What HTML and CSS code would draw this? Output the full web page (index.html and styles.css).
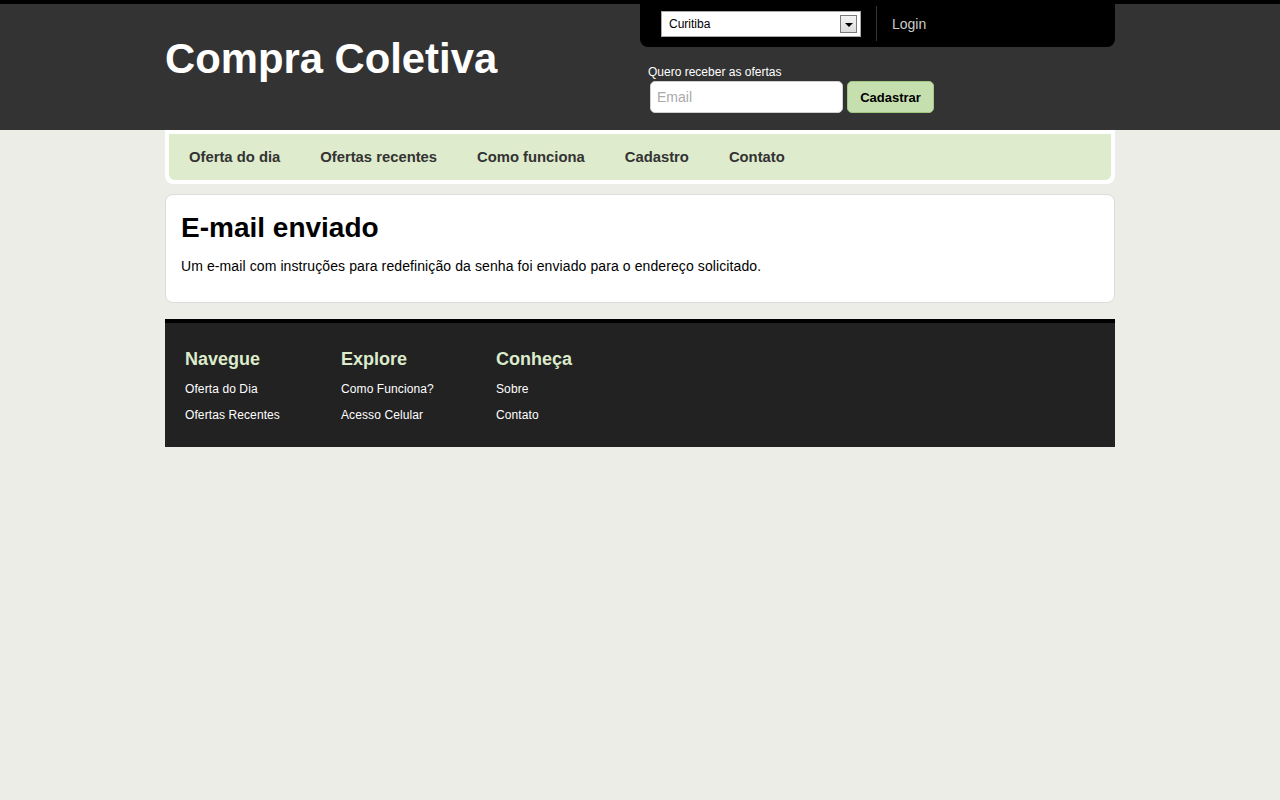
FILE: index.html
```html
<!DOCTYPE html>
<html lang="pt-BR">
<head>
<meta charset="utf-8">
<title>Compra Coletiva</title>
<link rel="stylesheet" href="styles.css">
</head>
<body>
<header class="topbar">
  <div class="header-inner">
    <h1 class="logo">Compra Coletiva</h1>
    <div class="header-right">
      <div class="account-bar">
        <div class="city-select">
          <span class="city-name">Curitiba</span>
          <span class="city-arrow"></span>
        </div>
        <span class="divider"></span>
        <a class="login" href="#">Login</a>
      </div>
      <form class="subscribe">
        <label class="subscribe-label">Quero receber as ofertas</label>
        <div class="subscribe-row">
          <input class="email-input" type="text" placeholder="Email">
          <button class="btn-subscribe" type="button">Cadastrar</button>
        </div>
      </form>
    </div>
  </div>
</header>

<nav class="main-nav">
  <ul class="nav-list">
    <li><a href="#">Oferta do dia</a></li>
    <li><a href="#">Ofertas recentes</a></li>
    <li><a href="#">Como funciona</a></li>
    <li><a href="#">Cadastro</a></li>
    <li><a href="#">Contato</a></li>
  </ul>
</nav>

<main class="content-box">
  <h2 class="content-title">E-mail enviado</h2>
  <p class="content-text">Um e-mail com instruções para redefinição da senha foi enviado para o endereço solicitado.</p>
</main>

<footer class="site-footer">
  <div class="footer-col">
    <h3 class="footer-title">Navegue</h3>
    <a href="#">Oferta do Dia</a>
    <a href="#">Ofertas Recentes</a>
  </div>
  <div class="footer-col">
    <h3 class="footer-title">Explore</h3>
    <a href="#">Como Funciona?</a>
    <a href="#">Acesso Celular</a>
  </div>
  <div class="footer-col">
    <h3 class="footer-title">Conheça</h3>
    <a href="#">Sobre</a>
    <a href="#">Contato</a>
  </div>
</footer>
</body>
</html>
```

FILE: styles.css
```css
* { box-sizing: border-box; }

body {
  margin: 0;
  background: #ededE7;
  font-family: "Liberation Sans", Arial, sans-serif;
  color: #000;
}

a { text-decoration: none; }

.topbar {
  background: #333333;
  border-top: 4px solid #000;
  height: 130px;
}

.header-inner {
  width: 950px;
  margin: 0 auto;
  display: flex;
  justify-content: space-between;
  align-items: flex-start;
}

.logo {
  margin: 31px 0 0 0;
  font-size: 41.8px;
  line-height: 48px;
  font-weight: bold;
  color: #fff;
}

.header-right {
  width: 475px;
}

.account-bar {
  background: #000;
  height: 43px;
  border-radius: 0 0 8px 8px;
  display: flex;
  align-items: flex-start;
  padding: 7px 0 0 21px;
}

.city-select {
  width: 200px;
  height: 26px;
  background: #fff;
  border: 1px solid #a9a9a9;
  display: flex;
  align-items: center;
  justify-content: space-between;
  padding: 0 3px 0 7px;
  font-size: 12px;
}

.city-arrow {
  width: 17px;
  height: 18px;
  border: 1px solid #7a7a7a;
  background: linear-gradient(#f4f4f4, #dcdcdc);
  position: relative;
}

.city-arrow::after {
  content: "";
  position: absolute;
  left: 4px;
  top: 7px;
  border-left: 4px solid transparent;
  border-right: 4px solid transparent;
  border-top: 4px solid #000;
}

.divider {
  width: 1px;
  height: 35px;
  margin: -5px 0 0 15px;
  background: #333;
}

.login {
  margin-left: 15px;
  font-size: 14px;
  line-height: 26px;
  color: #cccccc;
}

.subscribe {
  margin: 18px 0 0 8px;
}

.subscribe-label {
  display: block;
  font-size: 12px;
  line-height: 14px;
  color: #fff;
}

.subscribe-row {
  display: flex;
  margin-top: 2px;
  margin-left: 2px;
}

.email-input {
  width: 193px;
  height: 32px;
  border: 1px solid #cfcfcf;
  border-radius: 5px;
  background: #fff;
  padding: 0 6px;
  font-family: "Liberation Sans", Arial, sans-serif;
  font-size: 14px;
  outline: none;
}

.email-input::placeholder { color: #aaaaaa; }

.btn-subscribe {
  margin-left: 4px;
  width: 87px;
  height: 32px;
  background: #c6dfae;
  border: 1px solid #a3c886;
  border-radius: 5px;
  font-family: "Liberation Sans", Arial, sans-serif;
  font-size: 13px;
  font-weight: bold;
  color: #000;
  padding: 0;
}

.main-nav {
  width: 950px;
  margin: 0 auto;
  background: #fff;
  border-radius: 0 0 8px 8px;
  padding: 4px;
}

.nav-list {
  list-style: none;
  margin: 0;
  padding: 0;
  height: 46px;
  background: #deebcc;
  border-radius: 0 0 6px 6px;
  display: flex;
}

.nav-list a {
  display: block;
  padding: 0 20px;
  line-height: 46px;
  font-size: 14.8px;
  font-weight: bold;
  color: #333;
}

.content-box {
  display: block;
  width: 950px;
  margin: 10px auto 0;
  background: #fff;
  border: 1px solid #dcdcdc;
  border-radius: 8px;
  padding: 17px 15px 27px;
}

.content-title {
  margin: 0 0 13px;
  font-size: 28px;
  line-height: 32px;
  font-weight: bold;
}

.content-text {
  margin: 0;
  font-size: 14px;
  line-height: 18px;
  letter-spacing: 0.1px;
}

.site-footer {
  width: 950px;
  margin: 16px auto 0;
  background: #222222;
  border-top: 4px solid #000;
  padding: 25px 20px 19px;
  display: grid;
  grid-template-columns: 156px 155px 1fr;
}

.footer-col {
  display: flex;
  flex-direction: column;
}

.footer-title {
  margin: 0 0 6px;
  font-size: 18px;
  line-height: 22px;
  font-weight: bold;
  color: #dcebcb;
}

.footer-col a {
  font-size: 12px;
  line-height: 26px;
  color: #fff;
  letter-spacing: 0.1px;
}
```
